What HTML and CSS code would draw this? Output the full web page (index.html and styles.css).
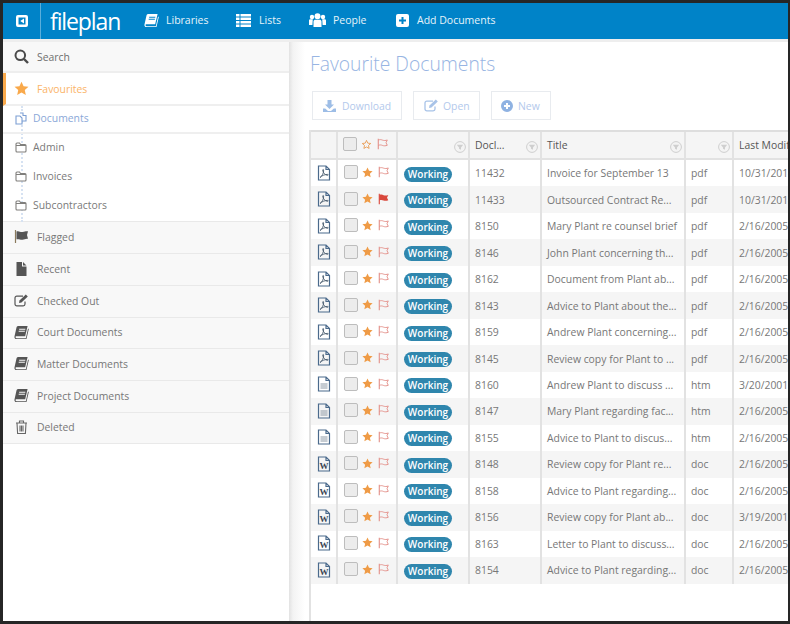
FILE: index.html
```html
<!DOCTYPE html>
<html lang="en">
<head>
<meta charset="utf-8">
<title>Fileplan - Favourite Documents</title>
<link rel="stylesheet" href="styles.css">
</head>
<body>
<svg class="defs" width="0" height="0" aria-hidden="true">
  <symbol id="book" viewBox="0 0 16 16"><path d="M4.2 1h10.3l-2.6 11H2.6c-.9 0-1.1.7-.9 1.2.2.5.6.8 1.2.8h9.7l2.4-10.2.8.5-2.5 10.7H2.6C1 15 .2 13.6.5 12.2L2.6 3C2.9 1.800 3.400 1 4.200 1zM5.500 4v1h6.500l.2-1zM5 6.200v1h6.500l.2-1z" fill-rule="evenodd"/></symbol>
  <symbol id="star" viewBox="0 0 16 16"><path d="M8 .8l2.200 4.800 5.200.6-3.900 3.500 1.100 5.200L8 12.300l-4.600 2.600 1.100-5.200L.6 6.200l5.200-.6z"/></symbol>
  <symbol id="star-o" viewBox="0 0 16 16"><path d="M8 2l1.800 4 4.300.5-3.200 2.900.9 4.300L8 11.600l-3.800 2.100.9-4.300-3.200-2.900 4.300-.5z" fill="none" stroke="currentColor" stroke-width="1.300"/></symbol>
  <symbol id="flag-o" viewBox="0 0 14 14"><path d="M1.500 1v12" fill="none" stroke="currentColor" stroke-width="1.300"/><path d="M1.500 2.500c2-1 3.500-.6 5 0s3.500.6 5.500-.2L10.500 5.500l1.500 3c-2 .8-4 .8-5.500.2s-3-1-5 0" fill="none" stroke="currentColor" stroke-width="1.100"/></symbol>
  <symbol id="flag-s" viewBox="0 0 14 14"><path d="M1.500 1v12" fill="none" stroke="currentColor" stroke-width="1.300"/><path d="M1.500 2.500c2-1 3.500-.6 5 0s3.500.6 5.500-.2L10.500 5.500l1.500 3c-2 .8-4 .8-5.500.2s-3-1-5 0z" fill="currentColor"/></symbol>
  <symbol id="filter" viewBox="0 0 12 12"><circle cx="6" cy="6" r="5.400" fill="#f4f4f4" stroke="#cfcfcf" stroke-width="1"/><path d="M2.800 3.800h6.400L7 6.500v2.300L5 7.800V6.500z" fill="#cfcfcf"/></symbol>
  <symbol id="pdf" viewBox="0 0 14 16"><path d="M1.500 1h7.500l3.500 3.500V15h-11zM9 1v3.500h3.500" fill="none" stroke="#4b6a8c" stroke-width="1.200"/><path d="M3 12.500c2-1 4-5 3.600-7.500-.1-.8-1-.6-.9.300.3 2.300 2.500 5 4.800 5 1 0 1-.9 0-.9-2.100 0-5.500.9-7.500 3.100z" fill="none" stroke="#4b5d70" stroke-width=".9"/></symbol>
  <symbol id="htm" viewBox="0 0 14 16"><path d="M1.500 1h7.500l3.500 3.500V15h-11zM9 1v3.500h3.500" fill="none" stroke="#4b6a8c" stroke-width="1.200"/><path d="M3.500 8h7M3.500 10h7M3.500 12h7" stroke="#8d99a6" stroke-width="1.200"/></symbol>
  <symbol id="doc" viewBox="0 0 14 16"><path d="M1.500 1h7.500l3.500 3.500V15h-11zM9 1v3.500h3.500" fill="none" stroke="#4b6a8c" stroke-width="1.200"/><text x="7" y="13" text-anchor="middle" class="wglyph">W</text></symbol>
  <symbol id="folder" viewBox="0 0 12 11"><path d="M1 2c0-.6.400-1 1-1h2.500l1 1.500H10c.6 0 1 .4 1 1V9c0 .6-.4 1-1 1H2c-.6 0-1-.4-1-1z" fill="#fff" stroke="#807f7c" stroke-width="1.100"/><path d="M1 3.500h10" stroke="#807f7c" stroke-width="1"/></symbol>
</svg>

<div class="frame">
  <header class="topbar">
    <button class="toggle" aria-label="Collapse">
      <svg width="12" height="12" viewBox="0 0 12 12"><path d="M2 0h8a2 2 0 0 1 2 2v8a2 2 0 0 1-2 2H2a2 2 0 0 1-2-2V2a2 2 0 0 1 2-2zM2.500 2.500v7h7v-7zM8 3.500v5L4.300 6z" fill="#fff" fill-rule="evenodd"/></svg>
    </button>
    <div class="logo">fileplan</div>
    <nav class="topnav">
      <a class="navitem nav-lib"><svg class="navicon" width="15" height="15"><use href="#book"/></svg>Libraries</a>
      <a class="navitem nav-lists"><svg class="navicon" width="15" height="13" viewBox="0 0 15 13"><path d="M0 0h3.500v2.500H0zM4.500 0H15v2.500H4.500zM0 3.500h3.500V6H0zM4.500 3.500H15V6H4.500zM0 7h3.500v2.500H0zM4.500 7H15v2.500H4.500zM0 10.500h3.500V13H0zM4.500 10.500H15V13H4.500z"/></svg>Lists</a>
      <a class="navitem nav-people"><svg class="navicon" width="17" height="14" viewBox="0 0 17 14"><circle cx="8.500" cy="3.200" r="3"/><circle cx="3" cy="4" r="2.200"/><circle cx="14" cy="4" r="2.200"/><path d="M4.500 8.500c0-1.200 1-1.800 2-1.800h4c1 0 2 .6 2 1.800V14h-8zM0 7.500c0-.9.700-1.300 1.500-1.300h2.300L3.400 12H0zM17 7.500c0-.9-.7-1.300-1.500-1.300h-2.300l.4 5.800H17z"/></svg>People</a>
      <a class="navitem nav-add"><svg class="navicon" width="13" height="13" viewBox="0 0 13 13"><path d="M2 0h9a2 2 0 0 1 2 2v9a2 2 0 0 1-2 2H2a2 2 0 0 1-2-2V2a2 2 0 0 1 2-2zM5.500 3v2.500H3v2h2.500V10h2V7.500H10v-2H7.500V3z" fill-rule="evenodd"/></svg>Add Documents</a>
    </nav>
  </header>

  <div class="body">
    <aside class="sidebar">
      <a class="side side-search"><svg class="sideicon" width="15" height="15" viewBox="0 0 15 15"><circle cx="6.300" cy="6.300" r="4.800" fill="none" stroke="#4a4a4a" stroke-width="2"/><path d="M10 10l4 4" stroke="#4a4a4a" stroke-width="2.400"/></svg>Search</a>
      <a class="side side-fav"><svg class="sideicon" width="15" height="15" fill="#f9a94b"><use href="#star"/></svg>Favourites</a>
      <div class="tree">
        <a class="tree-row tree-head"><svg class="treeicon" width="12" height="13" viewBox="0 0 12 13"><path d="M5 1h3v2.500h3V9H7M1 4h4l2 2v6H1z" fill="#fff" stroke="#7d9fd3" stroke-width="1.100"/></svg>Documents</a>
        <div class="tree-list">
          <a class="tree-row"><svg class="treeicon" width="12" height="11"><use href="#folder"/></svg>Admin</a>
          <a class="tree-row"><svg class="treeicon" width="12" height="11"><use href="#folder"/></svg>Invoices</a>
          <a class="tree-row"><svg class="treeicon" width="12" height="11"><use href="#folder"/></svg>Subcontractors</a>
        </div>
      </div>
      <a class="side"><svg class="sideicon" width="15" height="13" viewBox="0 0 14 13"><path d="M1 0v13" stroke="#8a7a5c" stroke-width="1.200"/><path d="M2 1.500c2.500-1 3.500.8 6 .5s3-1 5.500-.7L12.500 5l1 3.800c-2.500-.3-3.500.7-5.500 1s-3.500-1-6-.5z" fill="#555"/></svg>Flagged</a>
      <a class="side"><svg class="sideicon" width="15" height="14" viewBox="0 0 15 14"><path d="M2.500 0H8v4.500h4.500V14h-10zM9 0l3.500 3.500H9z" fill="#555"/></svg>Recent</a>
      <a class="side"><svg class="sideicon" width="15" height="13" viewBox="0 0 15 13"><path d="M11 7.500V10c0 1-.8 1.800-1.800 1.800H2.800C1.800 11.800 1 11 1 10V4c0-1 .8-1.800 1.800-1.800H9" fill="none" stroke="#555" stroke-width="1.200"/><path d="M5 9l.5-2.500L11.800.5l2 2L7.500 8.500z" fill="#555"/></svg>Checked Out</a>
      <a class="side side-court"><svg class="sideicon side-dark" width="15" height="15"><use href="#book"/></svg>Court Documents</a>
      <a class="side"><svg class="sideicon side-dark" width="15" height="15"><use href="#book"/></svg>Matter Documents</a>
      <a class="side"><svg class="sideicon side-dark" width="15" height="15"><use href="#book"/></svg>Project Documents</a>
      <a class="side side-del"><svg class="sideicon" width="15" height="14" viewBox="0 0 15 14"><path d="M2 3h11M5.500 3V1h4v2M3 3l.6 10.500h7.800L12 3M6 5.500v6M7.500 5.500v6M9 5.500v6" fill="none" stroke="#666" stroke-width="1.100"/></svg>Deleted</a>
    </aside>

    <main class="main">
      <h1 class="title">Favourite Documents</h1>
      <div class="actions">
        <button class="btn btn-dl"><svg width="13" height="12" viewBox="0 0 13 12"><path d="M4.500 0h4v4.500h2.500L6.500 9 2 4.500h2.500zM0 8.500h2.200L5 11h3l2.800-2.500H13V12H0z" fill="#9dbde6"/></svg>Download</button>
        <button class="btn btn-open"><svg width="15" height="13" viewBox="0 0 15 13"><path d="M11 7.500V10c0 1-.8 1.800-1.800 1.800H2.800C1.800 11.800 1 11 1 10V4c0-1 .8-1.800 1.800-1.800H9" fill="none" stroke="#a8c3e8" stroke-width="1.300"/><path d="M5 9l.5-2.500L11.800.5l2 2L7.500 8.500z" fill="#a8c3e8"/></svg>Open</button>
        <button class="btn btn-new"><svg width="12" height="12" viewBox="0 0 12 12"><path d="M6 0a6 6 0 1 1 0 12A6 6 0 0 1 6 0zM5 3v2H3v2h2v2h2V7h2V5H7V3z" fill="#8fb2e2" fill-rule="evenodd"/></svg>New</button>
      </div>

      <div class="table">
        <div class="row head">
          <div class="cell"></div>
          <div class="cell c-tools"><span class="check"></span><svg class="i-star" width="11" height="11"><use href="#star-o"/></svg><svg class="i-flag" width="12" height="12"><use href="#flag-o"/></svg></div>
          <div class="cell c-filter"><svg class="filter" width="12" height="12"><use href="#filter"/></svg></div>
          <div class="cell c-filter"><span class="htext">Docl...</span><svg class="filter" width="12" height="12"><use href="#filter"/></svg></div>
          <div class="cell c-filter"><span class="htext">Title</span><svg class="filter" width="12" height="12"><use href="#filter"/></svg></div>
          <div class="cell c-filter"><svg class="filter" width="12" height="12"><use href="#filter"/></svg></div>
          <div class="cell"><span class="htext">Last Modified</span></div>
        </div>

        <div class="row"><div class="cell c-ic"><svg width="14" height="16"><use href="#pdf"/></svg></div><div class="cell c-tools"><span class="check"></span><svg class="i-star" width="11" height="11"><use href="#star"/></svg><svg class="i-flag" width="12" height="12"><use href="#flag-o"/></svg></div><div class="cell"><span class="badge">Working</span></div><div class="cell">11432</div><div class="cell">Invoice for September 13</div><div class="cell">pdf</div><div class="cell">10/31/2014</div></div>
        <div class="row"><div class="cell c-ic"><svg width="14" height="16"><use href="#pdf"/></svg></div><div class="cell c-tools"><span class="check"></span><svg class="i-star" width="11" height="11"><use href="#star"/></svg><svg class="i-flag on" width="12" height="12"><use href="#flag-s"/></svg></div><div class="cell"><span class="badge">Working</span></div><div class="cell">11433</div><div class="cell">Outsourced Contract Re...</div><div class="cell">pdf</div><div class="cell">10/31/2014</div></div>
        <div class="row"><div class="cell c-ic"><svg width="14" height="16"><use href="#pdf"/></svg></div><div class="cell c-tools"><span class="check"></span><svg class="i-star" width="11" height="11"><use href="#star"/></svg><svg class="i-flag" width="12" height="12"><use href="#flag-o"/></svg></div><div class="cell"><span class="badge">Working</span></div><div class="cell">8150</div><div class="cell">Mary Plant re counsel brief</div><div class="cell">pdf</div><div class="cell">2/16/2005</div></div>
        <div class="row"><div class="cell c-ic"><svg width="14" height="16"><use href="#pdf"/></svg></div><div class="cell c-tools"><span class="check"></span><svg class="i-star" width="11" height="11"><use href="#star"/></svg><svg class="i-flag" width="12" height="12"><use href="#flag-o"/></svg></div><div class="cell"><span class="badge">Working</span></div><div class="cell">8146</div><div class="cell">John Plant concerning th...</div><div class="cell">pdf</div><div class="cell">2/16/2005</div></div>
        <div class="row"><div class="cell c-ic"><svg width="14" height="16"><use href="#pdf"/></svg></div><div class="cell c-tools"><span class="check"></span><svg class="i-star" width="11" height="11"><use href="#star"/></svg><svg class="i-flag" width="12" height="12"><use href="#flag-o"/></svg></div><div class="cell"><span class="badge">Working</span></div><div class="cell">8162</div><div class="cell">Document from Plant ab...</div><div class="cell">pdf</div><div class="cell">2/16/2005</div></div>
        <div class="row"><div class="cell c-ic"><svg width="14" height="16"><use href="#pdf"/></svg></div><div class="cell c-tools"><span class="check"></span><svg class="i-star" width="11" height="11"><use href="#star"/></svg><svg class="i-flag" width="12" height="12"><use href="#flag-o"/></svg></div><div class="cell"><span class="badge">Working</span></div><div class="cell">8143</div><div class="cell">Advice to Plant about the...</div><div class="cell">pdf</div><div class="cell">2/16/2005</div></div>
        <div class="row"><div class="cell c-ic"><svg width="14" height="16"><use href="#pdf"/></svg></div><div class="cell c-tools"><span class="check"></span><svg class="i-star" width="11" height="11"><use href="#star"/></svg><svg class="i-flag" width="12" height="12"><use href="#flag-o"/></svg></div><div class="cell"><span class="badge">Working</span></div><div class="cell">8159</div><div class="cell">Andrew Plant concerning...</div><div class="cell">pdf</div><div class="cell">2/16/2005</div></div>
        <div class="row"><div class="cell c-ic"><svg width="14" height="16"><use href="#pdf"/></svg></div><div class="cell c-tools"><span class="check"></span><svg class="i-star" width="11" height="11"><use href="#star"/></svg><svg class="i-flag" width="12" height="12"><use href="#flag-o"/></svg></div><div class="cell"><span class="badge">Working</span></div><div class="cell">8145</div><div class="cell">Review copy for Plant to ...</div><div class="cell">pdf</div><div class="cell">2/16/2005</div></div>
        <div class="row"><div class="cell c-ic"><svg width="14" height="16"><use href="#htm"/></svg></div><div class="cell c-tools"><span class="check"></span><svg class="i-star" width="11" height="11"><use href="#star"/></svg><svg class="i-flag" width="12" height="12"><use href="#flag-o"/></svg></div><div class="cell"><span class="badge">Working</span></div><div class="cell">8160</div><div class="cell">Andrew Plant to discuss ...</div><div class="cell">htm</div><div class="cell">3/20/2001</div></div>
        <div class="row"><div class="cell c-ic"><svg width="14" height="16"><use href="#htm"/></svg></div><div class="cell c-tools"><span class="check"></span><svg class="i-star" width="11" height="11"><use href="#star"/></svg><svg class="i-flag" width="12" height="12"><use href="#flag-o"/></svg></div><div class="cell"><span class="badge">Working</span></div><div class="cell">8147</div><div class="cell">Mary Plant regarding fac...</div><div class="cell">htm</div><div class="cell">2/16/2005</div></div>
        <div class="row"><div class="cell c-ic"><svg width="14" height="16"><use href="#htm"/></svg></div><div class="cell c-tools"><span class="check"></span><svg class="i-star" width="11" height="11"><use href="#star"/></svg><svg class="i-flag" width="12" height="12"><use href="#flag-o"/></svg></div><div class="cell"><span class="badge">Working</span></div><div class="cell">8155</div><div class="cell">Advice to Plant to discus...</div><div class="cell">htm</div><div class="cell">2/16/2005</div></div>
        <div class="row"><div class="cell c-ic"><svg width="14" height="16"><use href="#doc"/></svg></div><div class="cell c-tools"><span class="check"></span><svg class="i-star" width="11" height="11"><use href="#star"/></svg><svg class="i-flag" width="12" height="12"><use href="#flag-o"/></svg></div><div class="cell"><span class="badge">Working</span></div><div class="cell">8148</div><div class="cell">Review copy for Plant re...</div><div class="cell">doc</div><div class="cell">2/16/2005</div></div>
        <div class="row"><div class="cell c-ic"><svg width="14" height="16"><use href="#doc"/></svg></div><div class="cell c-tools"><span class="check"></span><svg class="i-star" width="11" height="11"><use href="#star"/></svg><svg class="i-flag" width="12" height="12"><use href="#flag-o"/></svg></div><div class="cell"><span class="badge">Working</span></div><div class="cell">8158</div><div class="cell">Advice to Plant regarding...</div><div class="cell">doc</div><div class="cell">2/16/2005</div></div>
        <div class="row"><div class="cell c-ic"><svg width="14" height="16"><use href="#doc"/></svg></div><div class="cell c-tools"><span class="check"></span><svg class="i-star" width="11" height="11"><use href="#star"/></svg><svg class="i-flag" width="12" height="12"><use href="#flag-o"/></svg></div><div class="cell"><span class="badge">Working</span></div><div class="cell">8156</div><div class="cell">Review copy for Plant ab...</div><div class="cell">doc</div><div class="cell">3/19/2001</div></div>
        <div class="row"><div class="cell c-ic"><svg width="14" height="16"><use href="#doc"/></svg></div><div class="cell c-tools"><span class="check"></span><svg class="i-star" width="11" height="11"><use href="#star"/></svg><svg class="i-flag" width="12" height="12"><use href="#flag-o"/></svg></div><div class="cell"><span class="badge">Working</span></div><div class="cell">8163</div><div class="cell">Letter to Plant to discuss...</div><div class="cell">doc</div><div class="cell">2/16/2005</div></div>
        <div class="row"><div class="cell c-ic"><svg width="14" height="16"><use href="#doc"/></svg></div><div class="cell c-tools"><span class="check"></span><svg class="i-star" width="11" height="11"><use href="#star"/></svg><svg class="i-flag" width="12" height="12"><use href="#flag-o"/></svg></div><div class="cell"><span class="badge">Working</span></div><div class="cell">8154</div><div class="cell">Advice to Plant regarding...</div><div class="cell">doc</div><div class="cell">2/16/2005</div></div>
      </div>
    </main>
  </div>
</div>
</body>
</html>
```
FILE: styles.css
```css
* { box-sizing: border-box; }
html, body { margin: 0; height: 100%; overflow: hidden; }
body { background: #262626; font-family: "Open Sans", "Liberation Sans", sans-serif; font-size: 10.400px; color: #777; }
.defs { position: absolute; }
.wglyph { font-family: "Liberation Serif", serif; font-weight: 700; font-size: 9px; fill: #3a4654; }

.frame { width: 790px; height: 624px; padding: 3px 2px 3px 3px; display: flex; flex-direction: column; }

.topbar { height: 36px; flex: none; background: #0083c8; display: flex; align-items: center; color: #fff; }
.toggle { width: 38px; height: 36px; padding: 0 0 0 1px; background: none; border: 0; border-right: 1px solid #5aaedb; display: flex; align-items: center; justify-content: center; }
.logo { margin-left: 9px; width: 94px; font-family: "Open Sans", sans-serif; font-weight: 400; font-size: 23px; letter-spacing: -1.100px; line-height: 34px; color: #fff; }
.topnav { display: flex; align-items: center; }
.navitem { display: flex; align-items: center; font-size: 10.500px; line-height: 14px; color: #e6f3fa; padding-bottom: 2px; }
.navicon { fill: #fff; margin-right: 7px; flex: none; }
.nav-lib { width: 92px; }
.nav-lists { width: 73px; }
.nav-lists .navicon { margin-right: 8px; }
.nav-people { width: 87px; }
.nav-add .navicon { margin-right: 8px; }

.body { flex: 1; min-height: 0; display: flex; padding-top: 3px; background: #eeeeee; }

.sidebar { width: 286px; flex: none; background: #fff; align-self: stretch; }
.side { display: flex; align-items: center; height: 32px; padding-left: 11px; padding-bottom: 2px; background: #f8f8f8; border-bottom: 1px solid #e9e9e9; color: #777; }
.sideicon { flex: none; margin-right: 8px; }
.side-dark { fill: #555; }
.side-search { height: 31px; padding-bottom: 0; border-bottom: 2px solid #eeeeee; color: #6f6f6f; }
.side-fav { height: 33px; padding-bottom: 0; background: #fff; color: #fbb468; border-left: 3px solid #f9a94b; border-bottom: 2px solid #efefef; padding-left: 8px; }
.side-court { height: 31px; }
.side-del { height: 31px; }

.tree { position: relative; background: #fff; }
.tree::before { content: ""; position: absolute; left: 18px; top: 0; bottom: 0; border-left: 2px dotted #d6e2f2; }
.tree-row { position: relative; display: flex; align-items: center; height: 29px; padding-left: 12px; padding-bottom: 3px; color: #7a7a7a; }
.tree-head { height: 28px; padding-bottom: 2px; color: #8ba8d8; border-bottom: 2px solid #efefef; }
.tree-list { border-bottom: 1px solid #e9e9e9; }
.treeicon { flex: none; margin-right: 6px; }

.main { flex: 1; min-width: 0; overflow: hidden; background: linear-gradient(90deg, #e2e2e2 0, #f3f3f3 4px, #fbfbfb 12px, #fff 16px); padding: 0 0 0 20px; display: flex; flex-direction: column; }
.title { margin: 8px 0 0 1px; font-weight: 300; font-size: 19.300px; line-height: 28px; color: #98b5e3; }
.actions { display: flex; margin: 13px 0 0 3px; gap: 11px; }
.btn { height: 29px; display: flex; align-items: center; gap: 6px; background: #fff; border: 1px solid #e8ebef; padding: 0 0 0 10px; font: 10.400px "Open Sans", sans-serif; color: #b3c9ec; }
.btn-dl { width: 90px; }
.btn-open { width: 67px; gap: 4px; }
.btn-new { width: 60px; padding-left: 9px; gap: 5px; }

.table { flex: 1; margin-top: 10px; min-height: 0; width: 479px; border-left: 2px solid #e2e2e2; }
.row { display: grid; grid-template-columns: 25px 60px 72px 72px 144px 48px 58px; height: 26.470px; }
.row:nth-child(odd) { background: #f5f5f5; }
.row.head { height: 30px; background: #f5f5f5; border-top: 2px solid #dedede; border-bottom: 2px solid #e2e2e2; }
.cell { display: flex; align-items: center; min-width: 0; overflow: hidden; padding-left: 5px; white-space: nowrap; color: #777; }
.cell + .cell { border-left: 2px solid #e2e2e2; }
.c-ic { padding-left: 6px; padding-bottom: 1px; }
.c-tools { padding-left: 6px; padding-bottom: 2px; }
.head .c-tools { padding-left: 5px; }
.c-filter { justify-content: space-between; padding-right: 2px; padding-top: 6px; }
.c-filter .filter { margin-left: auto; flex: none; }
.head .cell { padding-top: 0; }
.head .c-filter { padding-top: 4px; }
.htext { color: #555; margin-top: -4px; }
.head .cell:last-child .htext { margin-top: 0; }
.check { width: 14px; height: 14px; flex: none; background: #ececec; border: 1px solid #bdbdbd; border-radius: 2px; }
.i-star { margin-left: 4px; fill: #ef9b46; color: #e89a50; flex: none; }
.i-flag { margin-left: 5px; color: #e3918a; flex: none; }
.i-flag.on { color: #d9483c; }
.badge { display: block; width: 48px; height: 15px; margin: 2px 0 0 1px; background: #2f86ad; color: #fff; font-size: 10px; font-weight: 600; line-height: 15px; text-align: center; border-radius: 8px; }
```
